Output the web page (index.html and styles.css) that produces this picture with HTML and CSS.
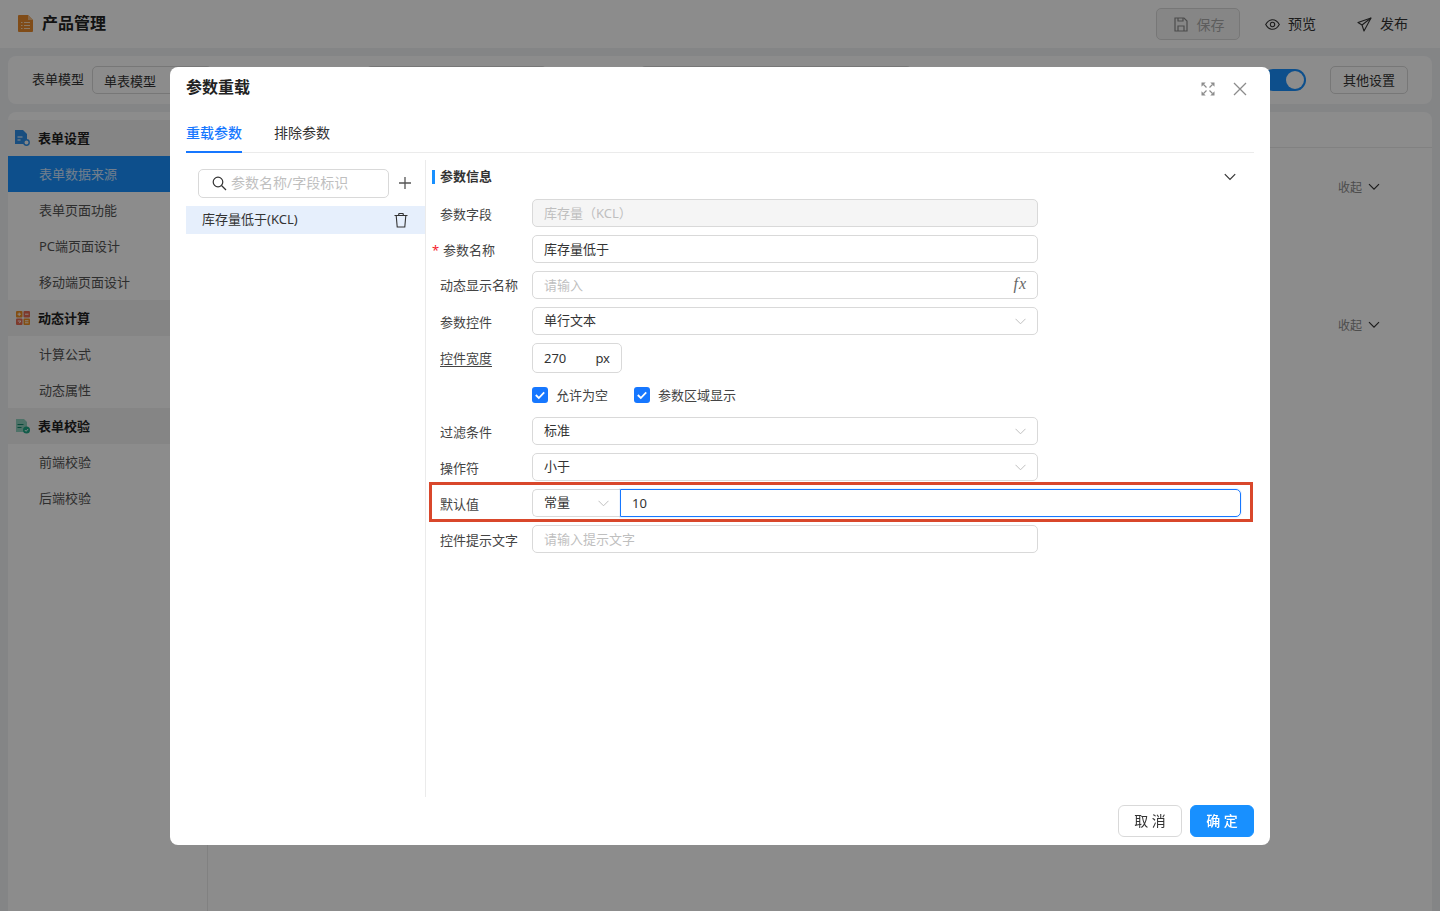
FILE: index.html
```html
<!doctype html>
<html>

  <head>
    <title>产品管理</title>
    <meta charset="utf-8">
    <link rel="stylesheet" href="styles.css">
  </head>

  <body>

    <div class='page'>
      <header class='topbar'>
        <div class='topbar-title'>
          <svg class='doc-icon' width='15' height='17' viewBox='0 0 15 17'>
            <path d='M0 1a1 1 0 0 1 1-1h9l5 5v11a1 1 0 0 1-1 1H1a1 1 0 0 1-1-1z' fill='#ea8a2c'/>
            <path d='M10 0l5 5h-5z' fill='#f5bd86'/>
            <path d='M3 7.500h1.500M6 7.500h6M3 10.500h1.500M6 10.500h6M3 13.500h1.500M6 13.500h6' stroke='#fbdcb8' stroke-width='1.200'/>
          </svg>
          <span>产品管理</span>
        </div>
        <div class='topbar-actions'>
          <button class='save-btn'>
            <svg width='14' height='15' viewBox='0 0 14 15' fill='none' stroke='#8a8a8a' stroke-width='1.2'>
              <path d='M1 1h9l3 3v10H1z'/><path d='M4 1v3h5V1M4 14V9h6v5'/>
            </svg>
            保存
          </button>
          <a class='top-link'>
            <svg width='15' height='11' viewBox='0 0 15 11' fill='none' stroke='#333' stroke-width='1.1'>
              <path d='M.7 5.500C2.500 2.200 4.800.7 7.500.7s5 1.500 6.800 4.800c-1.800 3.300-4.100 4.800-6.800 4.800S2.500 8.800.7 5.500z'/>
              <circle cx='7.500' cy='5.500' r='2.200'/>
            </svg>
            <span>预览</span>
          </a>
          <a class='top-link'>
            <svg width='15' height='15' viewBox='0 0 15 15' fill='none' stroke='#333' stroke-width='1.1' stroke-linejoin='round'>
              <path d='M14 1L1 5.500l4 2.500 2 6z'/><path d='M14 1L5 8'/>
            </svg>
            <span>发布</span>
          </a>
        </div>
      </header>

      <div class='main'>
        <div class='toolbar'>
          <span class='toolbar-label'>表单模型</span>
          <span class='toolbar-select'>单表模型</span>
          <span class='toolbar-box box-a'></span>
          <span class='toolbar-box box-b'></span>
          <span class='toolbar-space'></span>
          <span class='toggle'><i></i></span>
          <button class='other-btn'>其他设置</button>
        </div>

        <div class='workspace'>
          <aside class='sidebar'>
            <div class='side-group'>
              <svg width='16' height='16' viewBox='0 0 16 16'>
                <path d='M0 0h8l4 4v10H0z' fill='#2f8fe8'/>
                <path d='M2.500 7h5M2.500 10h3' stroke='#fff' stroke-width='1.100'/>
                <circle cx='11.500' cy='12.500' r='2.700' fill='#f5f5f5' stroke='#2f8fe8' stroke-width='1.400'/>
              </svg>
              <span>表单设置</span>
            </div>
            <a class='side-item active'>表单数据来源</a>
            <a class='side-item'>表单页面功能</a>
            <a class='side-item'>PC端页面设计</a>
            <a class='side-item'>移动端页面设计</a>
            <div class='side-group'>
              <svg width='16' height='16' viewBox='0 0 16 16'>
                <rect x='1' y='1' width='6.500' height='6.500' rx='1' fill='#ee8f22'/>
                <rect x='8.500' y='1' width='6.500' height='6.500' rx='1' fill='#e56a50'/>
                <rect x='1' y='8.500' width='6.500' height='6.500' rx='1' fill='#e56a50'/>
                <rect x='8.500' y='8.500' width='6.500' height='6.500' rx='1' fill='#ee8f22'/>
                <path d='M2.500 4.200h3.500M4.200 2.500V6M10 4.200h3.500M2.800 11h3L4.300 13.200M10 10.800h3.500M10 12.800h3.500' stroke='#fff' stroke-width='.9' fill='none'/>
              </svg>
              <span>动态计算</span>
            </div>
            <a class='side-item'>计算公式</a>
            <a class='side-item'>动态属性</a>
            <div class='side-group'>
              <svg width='16' height='16' viewBox='0 0 16 16'>
                <path d='M1 1h8l3 3v10H1z' fill='#8fd0bd'/>
                <path d='M2.500 6.500h6M2.500 9.500h4' stroke='#14866a' stroke-width='1.100'/>
                <circle cx='11.500' cy='12' r='3.500' fill='#1fa785'/>
                <path d='M9.800 12l1.300 1.300 2-2.300' stroke='#fff' stroke-width='.9' fill='none'/>
              </svg>
              <span>表单校验</span>
            </div>
            <a class='side-item'>前端校验</a>
            <a class='side-item'>后端校验</a>
          </aside>

          <section class='canvas'>
            <div class='canvas-tabs'></div>
            <div class='canvas-section'>
              <span class='fold'>收起
                <svg width='12' height='8' viewBox='0 0 12 8' fill='none' stroke='#333' stroke-width='1.200'><path d='M1 1.200l5 5 5-5'/></svg>
              </span>
            </div>
            <div class='canvas-section'>
              <span class='fold'>收起
                <svg width='12' height='8' viewBox='0 0 12 8' fill='none' stroke='#333' stroke-width='1.200'><path d='M1 1.200l5 5 5-5'/></svg>
              </span>
            </div>
          </section>
        </div>
      </div>
    </div>

    <div class='mask'></div>

    <div class='modal'>
      <div class='modal-head'>
        <span class='modal-title'>参数重载</span>
        <div class='modal-tools'>
          <svg width='14' height='14' viewBox='0 0 14 14' fill='#8c8c8c'>
            <path d='M.5.500h4.200L.5 4.700zM13.500.500H9.300L13.500 4.700zM.5 13.500h4.200L.5 9.300zM13.500 13.500H9.300L13.500 9.300z'/>
            <path d='M2.500 2.500l3 3M11.500 2.500l-3 3M2.500 11.500l3-3M11.500 11.500l-3-3' stroke='#8c8c8c' stroke-width='1.200'/>
          </svg>
          <svg width='14' height='14' viewBox='0 0 14 14' fill='none' stroke='#8c8c8c' stroke-width='1.300'>
            <path d='M1 1l12 12M13 1L1 13'/>
          </svg>
        </div>
      </div>

      <div class='tabs'>
        <a class='tab active'>重载参数</a>
        <a class='tab'>排除参数</a>
      </div>

      <div class='modal-body'>
        <div class='param-list'>
          <div class='param-search'>
            <div class='search-box'>
              <svg width='15' height='15' viewBox='0 0 15 15' fill='none' stroke='#333' stroke-width='1.200'>
                <circle cx='6' cy='6' r='4.800'/><path d='M9.500 9.500L14 14'/>
              </svg>
              <span>参数名称/字段标识</span>
            </div>
            <svg class='plus' width='12' height='12' viewBox='0 0 12 12' stroke='#555' stroke-width='1.300'>
              <path d='M6 0v12M0 6h12'/>
            </svg>
          </div>
          <div class='param-row'>
            <span>库存量低于(KCL)</span>
            <svg width='14' height='15' viewBox='0 0 14 15' fill='none' stroke='#333' stroke-width='1.100'>
              <path d='M.5 2.500h13M4.500 2.500l.5-2h4l.5 2M2.200 2.500l1 11.500h7.600l1-11.500'/>
            </svg>
          </div>
        </div>

        <div class='param-form'>
          <div class='section-head'>
            <span class='section-title'>参数信息</span>
            <svg width='12' height='8' viewBox='0 0 12 8' fill='none' stroke='#333' stroke-width='1.200'><path d='M.8 1.200L6 6.400l5.200-5.200'/></svg>
          </div>

          <div class='form-rows'>
            <div class='form-row'>
              <label class='form-label'>参数字段</label>
              <div class='field disabled'>库存量（KCL）</div>
            </div>
            <div class='form-row'>
              <label class='form-label required'><em>*</em>参数名称</label>
              <div class='field'>库存量低于</div>
            </div>
            <div class='form-row'>
              <label class='form-label raised'>动态显示名称</label>
              <div class='field placeholder'>请输入<i class='fx'>fx</i></div>
            </div>
            <div class='form-row'>
              <label class='form-label'>参数控件</label>
              <div class='field select'>单行文本
                <svg class='arrow' width='11' height='7' viewBox='0 0 11 7' fill='none' stroke='#bfbfbf'><path d='M.5.8l5 5 5-5'/></svg>
              </div>
            </div>
            <div class='form-row'>
              <label class='form-label underline raised'>控件宽度</label>
              <div class='field width-field'>270<span>px</span></div>
            </div>
            <div class='form-row'>
              <span class='form-label'></span>
              <label class='check'>
                <svg width='16' height='16' viewBox='0 0 16 16'><rect width='16' height='16' rx='3' fill='#1677ff'/><path d='M3.800 8l3 3 5.400-5.600' fill='none' stroke='#fff' stroke-width='1.800'/></svg>
                <span>允许为空</span>
              </label>
              <label class='check'>
                <svg width='16' height='16' viewBox='0 0 16 16'><rect width='16' height='16' rx='3' fill='#1677ff'/><path d='M3.800 8l3 3 5.400-5.600' fill='none' stroke='#fff' stroke-width='1.800'/></svg>
                <span>参数区域显示</span>
              </label>
            </div>
            <div class='form-row'>
              <label class='form-label'>过滤条件</label>
              <div class='field select'>标准
                <svg class='arrow' width='11' height='7' viewBox='0 0 11 7' fill='none' stroke='#bfbfbf'><path d='M.5.8l5 5 5-5'/></svg>
              </div>
            </div>
            <div class='form-row'>
              <label class='form-label'>操作符</label>
              <div class='field select'>小于
                <svg class='arrow' width='11' height='7' viewBox='0 0 11 7' fill='none' stroke='#bfbfbf'><path d='M.5.8l5 5 5-5'/></svg>
              </div>
            </div>
            <div class='form-row'>
              <label class='form-label'>默认值</label>
              <div class='field select const-select'>常量
                <svg class='arrow' width='11' height='7' viewBox='0 0 11 7' fill='none' stroke='#bfbfbf'><path d='M.5.8l5 5 5-5'/></svg>
              </div>
              <div class='field const-input'>10</div>
              <div class='highlight'></div>
            </div>
            <div class='form-row'>
              <label class='form-label'>控件提示文字</label>
              <div class='field placeholder'>请输入提示文字</div>
            </div>
          </div>
        </div>
      </div>

      <div class='modal-foot'>
        <button class='btn'>取 消</button>
        <button class='btn primary'>确 定</button>
      </div>
    </div>

  </body>

</html>
```

FILE: styles.css
```css
:root {
  --text-color: #333;
  --border-color: #d9d9d9;
  --line-color: #ebebeb;
  --primary: #1890ff;
  --cjk: "Noto Sans", "Noto Sans CJK SC", sans-serif;
}

* {
  box-sizing: border-box;
}

body {
  margin: 0;
  height: 911px;
  overflow: hidden;
  font-family: var(--cjk);
  font-size: 13px;
  color: var(--text-color);
  background: #f0f2f5;
}

button {
  font-family: var(--cjk);
}

.page {
  display: flex;
  flex-direction: column;
  height: 911px;
}

.topbar {
  height: 48px;
  flex: none;
  background: #fff;
  display: flex;
  align-items: center;
  justify-content: space-between;
  padding: 0 32px 0 18px;
}

.topbar-title {
  display: flex;
  align-items: center;
  gap: 9px;
  font-size: 16px;
  font-weight: 700;
  color: #222;
  margin-top: -4px;
}

.doc-icon {
  margin-top: 2px;
}

.topbar-actions {
  display: flex;
  align-items: center;
}

.save-btn {
  width: 84px;
  height: 32px;
  display: flex;
  align-items: center;
  justify-content: center;
  gap: 9px;
  background: #f5f5f5;
  border: 1px solid var(--border-color);
  border-radius: 5px;
  color: #aaa;
  font-size: 14px;
  margin-right: 25px;
  padding: 0 0 0 2px;
}

.top-link {
  display: flex;
  align-items: center;
  gap: 8px;
  font-size: 14px;
}

.top-link span {
  padding-bottom: 2px;
}

.top-link + .top-link {
  margin-left: 41px;
}

.main {
  flex: 1;
  display: flex;
  flex-direction: column;
  gap: 8px;
  padding: 8px 8px 0;
}

.toolbar {
  height: 48px;
  flex: none;
  background: #fff;
  border-radius: 8px;
  display: flex;
  align-items: center;
  padding: 0 24px;
}

.toolbar-label {
  margin-right: 8px;
  line-height: 1;
  margin-top: -2px;
}

.toolbar-select {
  width: 120px;
  height: 28px;
  border: 1px solid var(--border-color);
  border-radius: 5px;
  padding: 0 11px;
  line-height: 29px;
}

.toolbar-box {
  height: 28px;
  border: 1px solid var(--border-color);
  border-radius: 5px;
}

.box-a {
  width: 181px;
  margin-left: 154px;
}

.box-b {
  width: 272px;
  margin-left: 93px;
}

.toolbar-space {
  flex: 1;
}

.toggle {
  width: 44px;
  height: 22px;
  border-radius: 11px;
  background: var(--primary);
  display: flex;
  justify-content: flex-end;
  padding: 2px;
  margin-right: 24px;
}

.toggle i {
  width: 18px;
  height: 18px;
  background: #fff;
  border-radius: 50%;
}

.other-btn {
  width: 78px;
  height: 28px;
  background: #fff;
  border: 1px solid var(--border-color);
  border-radius: 5px;
  font-size: 13px;
  color: var(--text-color);
  padding: 0 0 2px;
}

.workspace {
  flex: 1;
  display: flex;
  background: #fff;
  border-radius: 8px 8px 0 0;
}

.sidebar {
  width: 200px;
  flex: none;
  padding-top: 8px;
  border-right: 1px solid var(--line-color);
}

.side-group {
  height: 36px;
  display: flex;
  align-items: center;
  gap: 7px;
  padding-left: 7px;
  background: #f3f3f3;
  font-weight: 700;
  color: #222;
}

.side-group span {
  padding-bottom: 2px;
}

.side-item {
  height: 36px;
  display: flex;
  align-items: center;
  padding: 0 0 2px 31px;
  color: #555;
}

.side-item.active {
  background: var(--primary);
  color: #cfe6ff;
}

.canvas {
  flex: 1;
}

.canvas-tabs {
  height: 36px;
  border-bottom: 1px solid var(--line-color);
}

.canvas-section {
  height: 138px;
  display: flex;
  justify-content: flex-end;
  padding: 29px 52px 0 0;
}

.fold {
  display: flex;
  align-items: center;
  gap: 6px;
  height: 20px;
  color: #8c8c8c;
  font-size: 12px;
}

.mask {
  position: fixed;
  inset: 0;
  background: rgba(0, 0, 0, .45);
}

.modal {
  position: fixed;
  left: 170px;
  top: 67px;
  width: 1100px;
  height: 778px;
  background: #fff;
  border-radius: 8px;
  padding: 0 16px;
  display: flex;
  flex-direction: column;
}

.modal-head {
  height: 40px;
  flex: none;
  display: flex;
  align-items: center;
  justify-content: space-between;
  padding-right: 7px;
}

.modal-title {
  font-size: 16px;
  font-weight: 700;
  color: #222;
  margin-top: -2px;
}

.modal-tools {
  display: flex;
  align-items: center;
  gap: 18px;
  margin-top: 4px;
}

.tabs {
  height: 46px;
  flex: none;
  display: flex;
  gap: 32px;
  border-bottom: 1px solid var(--line-color);
}

.tab {
  height: 46px;
  padding-top: 15px;
  font-size: 14px;
  line-height: 22px;
}

.tab.active {
  color: #1677ff;
  font-weight: 500;
  border-bottom: 2px solid #1677ff;
}

.modal-body {
  height: 644px;
  flex: none;
  display: flex;
  padding-top: 7px;
}

.param-list {
  width: 239px;
  flex: none;
  padding-top: 9px;
}

.param-search {
  display: flex;
  align-items: center;
  padding-left: 12px;
  margin-bottom: 8px;
}

.search-box {
  width: 191px;
  height: 29px;
  border: 1px solid var(--border-color);
  border-radius: 5px;
  display: flex;
  align-items: center;
  gap: 4px;
  padding-left: 13px;
  font-size: 14px;
  color: #bfbfbf;
}

.search-box span {
  padding-bottom: 3px;
}

.plus {
  margin: -2px 0 0 10px;
}

.param-row {
  height: 28px;
  background: #e6effc;
  display: flex;
  align-items: center;
  justify-content: space-between;
  padding: 0 17px 0 16px;
}

.param-row span {
  padding-bottom: 3px;
}

.param-form {
  flex: 1;
  border-left: 1px solid var(--line-color);
  padding-left: 6px;
}

.section-head {
  height: 34px;
  display: flex;
  align-items: center;
  justify-content: space-between;
  padding-right: 18px;
}

.section-title {
  border-left: 3px solid var(--primary);
  padding-left: 5px;
  height: 14px;
  line-height: 13px;
  font-weight: 700;
}

.form-rows {
  display: flex;
  flex-direction: column;
  gap: 8px;
  margin-top: 5px;
  padding-left: 8px;
}

.form-row {
  display: flex;
  align-items: center;
  position: relative;
}

.form-label {
  width: 92px;
  flex: none;
  color: #444;
}

.form-label.raised {
  margin-top: -2px;
}

.form-label.required em {
  margin-left: -8px;
  width: 11px;
  display: inline-block;
  color: #f5222d;
  font-style: normal;
}

.form-label.underline {
  text-decoration: underline;
  text-underline-offset: 3px;
}

.field {
  width: 506px;
  height: 28px;
  border: 1px solid var(--border-color);
  border-radius: 5px;
  padding: 0 11px 2px;
  display: flex;
  align-items: center;
  justify-content: space-between;
}

.field.select {
  padding-bottom: 4px;
}

.field .arrow {
  margin-top: 4px;
}

.field.disabled {
  background: #f5f5f5;
  color: #bfbfbf;
}

.field.placeholder {
  color: #bfbfbf;
}

.fx {
  font-family: "Liberation Serif", serif;
  font-size: 16px;
  letter-spacing: 1px;
  color: #666;
  margin-right: -1px;
}

.width-field {
  width: 90px;
  height: 30px;
  padding-bottom: 0;
}

.check {
  display: flex;
  align-items: center;
  gap: 8px;
  height: 28px;
  margin-right: 26px;
  color: #444;
}

.check span {
  padding-bottom: 2px;
}

.const-select {
  width: 88px;
  border-radius: 5px 0 0 5px;
  border-right: 0;
}

.const-input {
  width: 621px;
  padding-bottom: 0;
  border: 1px solid #1677ff;
  box-shadow: 0 0 0 1px rgba(22, 119, 255, .08);
  border-radius: 0 5px 5px 0;
}

.highlight {
  position: absolute;
  left: -11px;
  top: -7px;
  width: 824px;
  height: 40px;
  border: 3px solid #d9472b;
}

.modal-foot {
  flex: 1;
  display: flex;
  justify-content: flex-end;
  gap: 8px;
  padding-top: 8px;
}

.btn {
  width: 64px;
  height: 32px;
  border: 1px solid var(--border-color);
  border-radius: 6px;
  background: #fff;
  color: var(--text-color);
  font-size: 14px;
  padding: 0 0 2px;
}

.btn.primary {
  background: var(--primary);
  border-color: var(--primary);
  color: #fff;
  font-weight: 500;
}
```
